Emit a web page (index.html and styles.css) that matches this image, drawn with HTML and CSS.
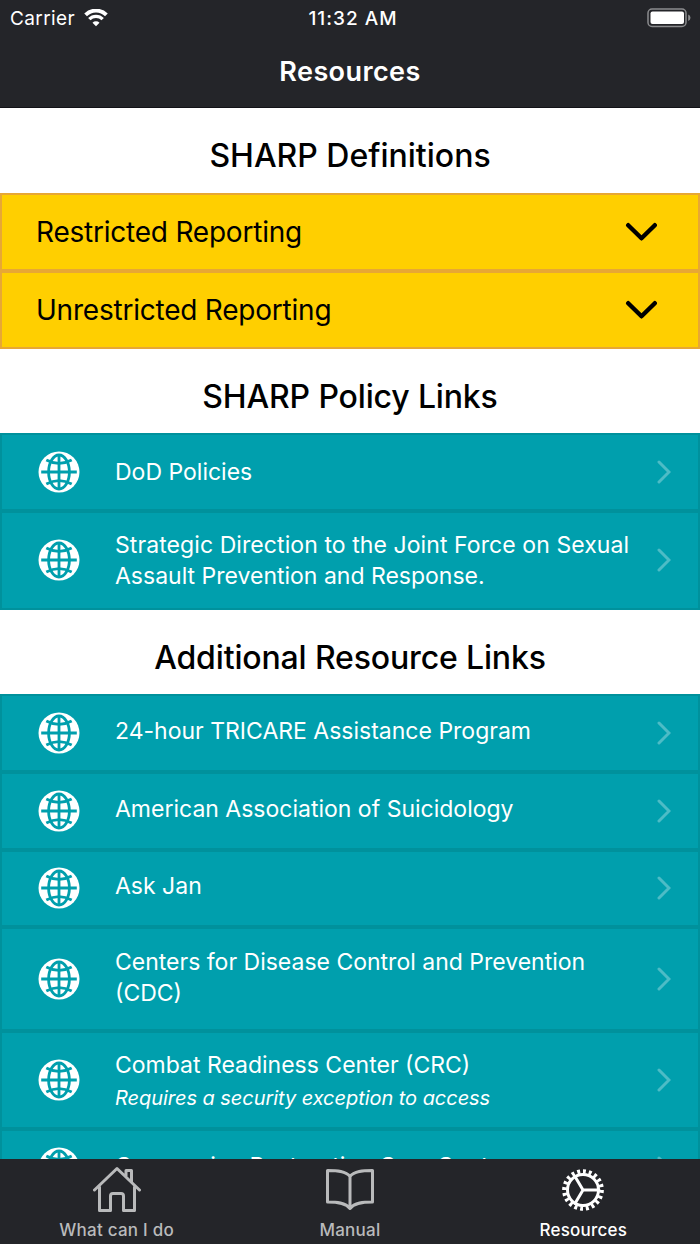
FILE: index.html
```html
<!DOCTYPE html>
<html lang="en">
<head>
  <meta charset="UTF-8">
  <title>Resources</title>
  <link rel="stylesheet" href="styles.css">
</head>
<body>
  <svg class="sprite" width="0" height="0">
    <symbol id="globe" viewBox="0 0 42 42">
      <circle cx="21" cy="21" r="20.5" fill="#fff"/>
      <g fill="none" stroke="#009fad" stroke-width="2.8">
        <path d="M3.200 21h35.600M21 4v34"/>
        <ellipse cx="21" cy="21" rx="10.400" ry="17"/>
        <path d="M8.300 9Q21 15.800 33.700 9M8.300 33Q21 26.200 33.700 33"/>
      </g>
    </symbol>
    <symbol id="arrow" viewBox="0 0 14 24">
      <path d="M2 2l10 10L2 22" fill="none" stroke="currentColor" stroke-width="3" stroke-linecap="round"/>
    </symbol>
    <symbol id="chevron" viewBox="0 0 32 20">
      <path d="M3.200 3.200L16.500 16.300 29.800 3.200" fill="none" stroke="currentColor" stroke-width="4.400" stroke-linecap="round" stroke-linejoin="round"/>
    </symbol>
  </svg>

  <header class="top-bar">
    <div class="status-bar">
      <div class="carrier">
        <span>Carrier</span>
        <svg class="wifi" viewBox="0 0 24 18">
          <path d="M1.600 5.900a14.600 14.600 0 0 1 20.800 0" stroke-width="3.800"/>
          <path d="M5.300 10.200a9.300 9.300 0 0 1 13.400 0" stroke-width="3.300"/>
          <path d="M12 17.300l-3.500-3.500a4.900 4.900 0 0 1 7 0z" class="dot"/>
        </svg>
      </div>
      <span class="time">11:32 AM</span>
      <svg class="battery" viewBox="0 0 44 20">
        <rect x="1" y="1" width="38" height="17.500" rx="4" fill="none" stroke="#8b8c8e" stroke-width="1.500"/>
        <rect x="3.500" y="3.500" width="33.500" height="12.500" rx="2" fill="#fff"/>
        <path d="M41.200 6.500q2.300 1 2.300 3.300t-2.300 3.300z" fill="#8b8c8e"/>
      </svg>
    </div>
    <h1>Resources</h1>
  </header>

  <main>
    <h2 class="definitions-title">SHARP Definitions</h2>
    <ul class="list accordion">
      <li><span class="label">Restricted Reporting</span><svg class="chevron"><use href="#chevron"/></svg></li>
      <li><span class="label">Unrestricted Reporting</span><svg class="chevron"><use href="#chevron"/></svg></li>
    </ul>

    <h2>SHARP Policy Links</h2>
    <ul class="list links">
      <li><svg class="globe"><use href="#globe"/></svg><span class="label">DoD Policies</span><svg class="arrow"><use href="#arrow"/></svg></li>
      <li class="tall"><svg class="globe"><use href="#globe"/></svg><span class="label"><span class="wide">Strategic Direction to the Joint Force on Sexual</span><br>Assault Prevention and Response.</span><svg class="arrow"><use href="#arrow"/></svg></li>
    </ul>

    <h2>Additional Resource Links</h2>
    <ul class="list links additional">
      <li><svg class="globe"><use href="#globe"/></svg><span class="label">24-hour TRICARE Assistance Program</span><svg class="arrow"><use href="#arrow"/></svg></li>
      <li><svg class="globe"><use href="#globe"/></svg><span class="label">American Association of Suicidology</span><svg class="arrow"><use href="#arrow"/></svg></li>
      <li><svg class="globe"><use href="#globe"/></svg><span class="label">Ask Jan</span><svg class="arrow"><use href="#arrow"/></svg></li>
      <li class="taller"><svg class="globe"><use href="#globe"/></svg><span class="label">Centers for Disease Control and Prevention<br>(CDC)</span><svg class="arrow"><use href="#arrow"/></svg></li>
      <li class="noted"><svg class="globe"><use href="#globe"/></svg><span class="label">Combat Readiness Center (CRC)<em>Requires a security exception to access</em></span><svg class="arrow"><use href="#arrow"/></svg></li>
      <li><svg class="globe"><use href="#globe"/></svg><span class="label">Concussion Restoration Care Center</span><svg class="arrow"><use href="#arrow"/></svg></li>
    </ul>
  </main>

  <nav class="tab-bar">
    <a class="tab">
      <svg viewBox="0 0 48 48">
        <path d="M1.500 24L24 2.500 46.500 24M6.500 21v23.500h11V30q0-2.500 2.500-2.500h8q2.500 0 2.500 2.500v14.500h11V21M33 10V4.500h5.500v11.500"/>
      </svg>
      <span>What can I do</span>
    </a>
    <a class="tab">
      <svg viewBox="0 0 48 48">
        <path d="M24 10.500C20 5 11 4.500 1.500 4.500v31.500c9 0 18 .5 22.500 6.500 4.500-6 13.500-6.500 22.500-6.500V4.500C37 4.500 28 5 24 10.500zM24 10.500V42"/>
      </svg>
      <span>Manual</span>
    </a>
    <a class="tab active">
      <svg viewBox="0 0 48 48">
        <circle cx="24" cy="24" r="15.500"/>
        <circle cx="24" cy="24" r="18.600" class="teeth" pathLength="200"/>
        <path d="M24 24h16M24 24l-8-13.500M24 24l-8 13.500"/>
      </svg>
      <span>Resources</span>
    </a>
  </nav>
</body>
</html>
```
FILE: styles.css
```css
* {
  box-sizing: border-box;
}

body {
  margin: 0;
  height: 1244px;
  display: flex;
  flex-direction: column;
  overflow: hidden;
  font-family: Inter, "Liberation Sans", sans-serif;
  background: #fff;
  color: #000;
}

.sprite {
  position: absolute;
}

.top-bar {
  flex: none;
  height: 108px;
  background: #242529;
  color: #fff;
  border-bottom: 1px solid #121217;
}

.status-bar {
  display: grid;
  grid-template-columns: 1fr auto 1fr;
  align-items: center;
  height: 36px;
  padding: 0 9px 0 10px;
  font-size: 19px;
}

.carrier {
  display: flex;
  align-items: center;
  gap: 9px;
  letter-spacing: 0.4px;
}

.wifi {
  width: 24px;
  height: 18px;
  fill: none;
  stroke: #fff;
}

.wifi .dot {
  fill: #fff;
  stroke: none;
}

.time {
  font-weight: 500;
  letter-spacing: 1px;
  margin-left: 5px;
}

.battery {
  width: 44px;
  height: 20px;
  justify-self: end;
  margin-bottom: 1px;
}

h1 {
  margin: 0;
  line-height: 72px;
  text-align: center;
  font-size: 27px;
  font-weight: 600;
  letter-spacing: 0.4px;
}

main {
  flex: 1;
  min-height: 0;
  overflow: hidden;
}

h2 {
  margin: 0;
  height: 84px;
  padding-top: 6px;
  line-height: 84px;
  text-align: center;
  font-size: 32px;
  font-weight: 500;
  letter-spacing: -0.15px;
}

.definitions-title {
  height: 85px;
  letter-spacing: 0;
}

.list {
  margin: 0;
  padding: 0;
  list-style: none;
}

.list li {
  display: flex;
  align-items: center;
  height: 78px;
  border: 2px solid;
}

.accordion li {
  padding: 0 41px 0 34px;
  justify-content: space-between;
  background: #ffcf00;
  border-color: #e7a735;
  font-size: 28px;
  letter-spacing: -0.22px;
}

.chevron {
  width: 32px;
  height: 20px;
}

.links li {
  padding: 0 27px 0 35.5px;
  background: #009fad;
  border-color: #00919c;
  color: #fff;
  font-size: 23px;
  line-height: 31px;
}

.links .tall {
  height: 98.5px;
}

.tall .label {
  padding-top: 2px;
}

.wide {
  letter-spacing: 0.08px;
}

.additional {
  padding-top: 0.5px;
}

.additional li {
  height: 77.8px;
}

.additional .label {
  padding-bottom: 3px;
}

.additional .taller {
  height: 103.6px;
}

.links .noted {
  height: 98.4px;
}

.noted .label {
  padding: 4px 0 0;
}

.globe {
  width: 42px;
  height: 42px;
  margin-right: 35.5px;
}

.links .label {
  flex: 1;
  white-space: nowrap;
}

.links em {
  display: block;
  font-size: 20px;
  line-height: 34px;
  letter-spacing: -0.05px;
}

.arrow {
  width: 14px;
  height: 24px;
  color: #4dbcc6;
}

.tab-bar {
  flex: none;
  display: flex;
  height: 85px;
  background: #242529;
}

.tab {
  flex: 1;
  display: flex;
  flex-direction: column;
  align-items: center;
  padding-top: 7px;
  color: #b9babb;
  font-size: 17px;
  font-weight: 500;
  letter-spacing: 0.25px;
}

.tab svg {
  flex: none;
  width: 48px;
  height: 48px;
  fill: none;
  stroke: currentColor;
  stroke-width: 3;
  stroke-linejoin: round;
  stroke-linecap: round;
}

.tab span {
  line-height: 30px;
  padding-top: 1px;
}

.tab.active {
  color: #fff;
}

.tab .teeth {
  stroke-dasharray: 5 5;
  stroke-width: 4.5;
  stroke-linecap: butt;
}
```
